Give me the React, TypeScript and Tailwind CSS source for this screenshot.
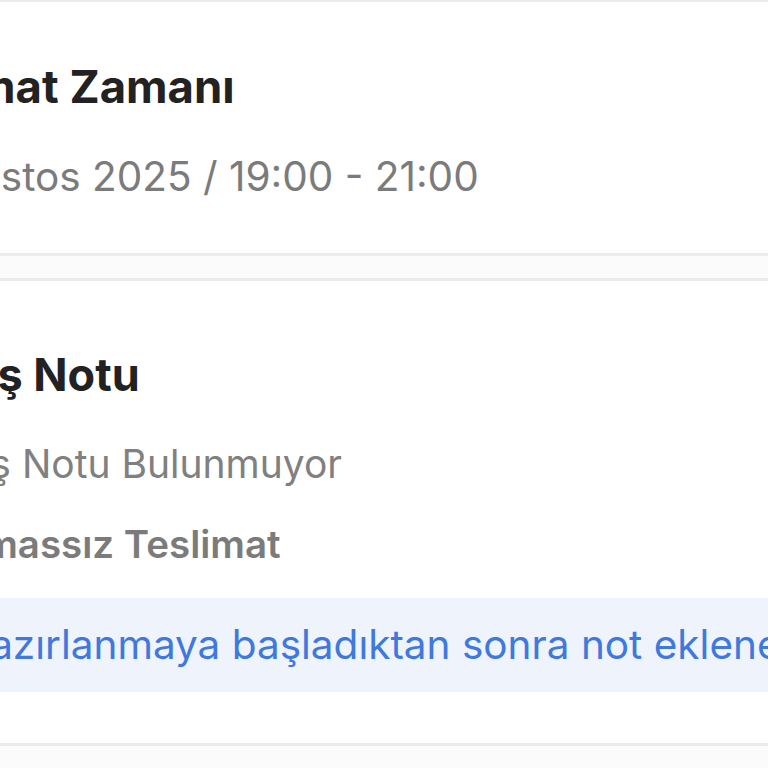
import React from "react";

export default function App() {
  const font = { fontFamily: "Inter, 'Noto Sans', sans-serif" };
  return (
    <div className="w-[768px] h-[768px] overflow-hidden bg-[#fbfbfb]" style={font}>
      <div className="-ml-[130px] w-[1200px]">
        <section className="bg-white border-t-2 border-b-[3px] border-[#ebebeb] pt-[58px] pb-[52px]">
          <h2 className="text-[45.5px] leading-[54px] font-bold text-[#222222] whitespace-nowrap">Teslimat Zamanı</h2>
          <p className="mt-[39px] text-[40.5px] leading-[48px] text-[#7b7b7b] whitespace-nowrap">14 Ağustos 2025 / 19:00 - 21:00</p>
        </section>
        <div className="h-[22px]" />
        <section className="bg-white border-t-[3px] border-b-[3px] border-[#ebebeb] pt-[67px] pb-[51px]">
          <h2 className="text-[45px] leading-[54px] font-bold text-[#222222] whitespace-nowrap">Sipariş Notu</h2>
          <p className="mt-[38px] ml-[15px] text-[39px] leading-[48px] text-[#808080] whitespace-nowrap">Sipariş Notu Bulunmuyor</p>
          <p className="mt-[32px] ml-[68px] text-[38.5px] leading-[48px] font-semibold text-[#7b7b7b] whitespace-nowrap">Temassız Teslimat</p>
          <div className="mt-[30px] h-[94px] bg-[#eef3fc] flex items-center -ml-[46px]">
            <span className="text-[40.5px] text-[#3f79dd] whitespace-nowrap">Sipariş hazırlanmaya başladıktan sonra not eklenemez.</span>
          </div>
        </section>
      </div>
    </div>
  );
}
